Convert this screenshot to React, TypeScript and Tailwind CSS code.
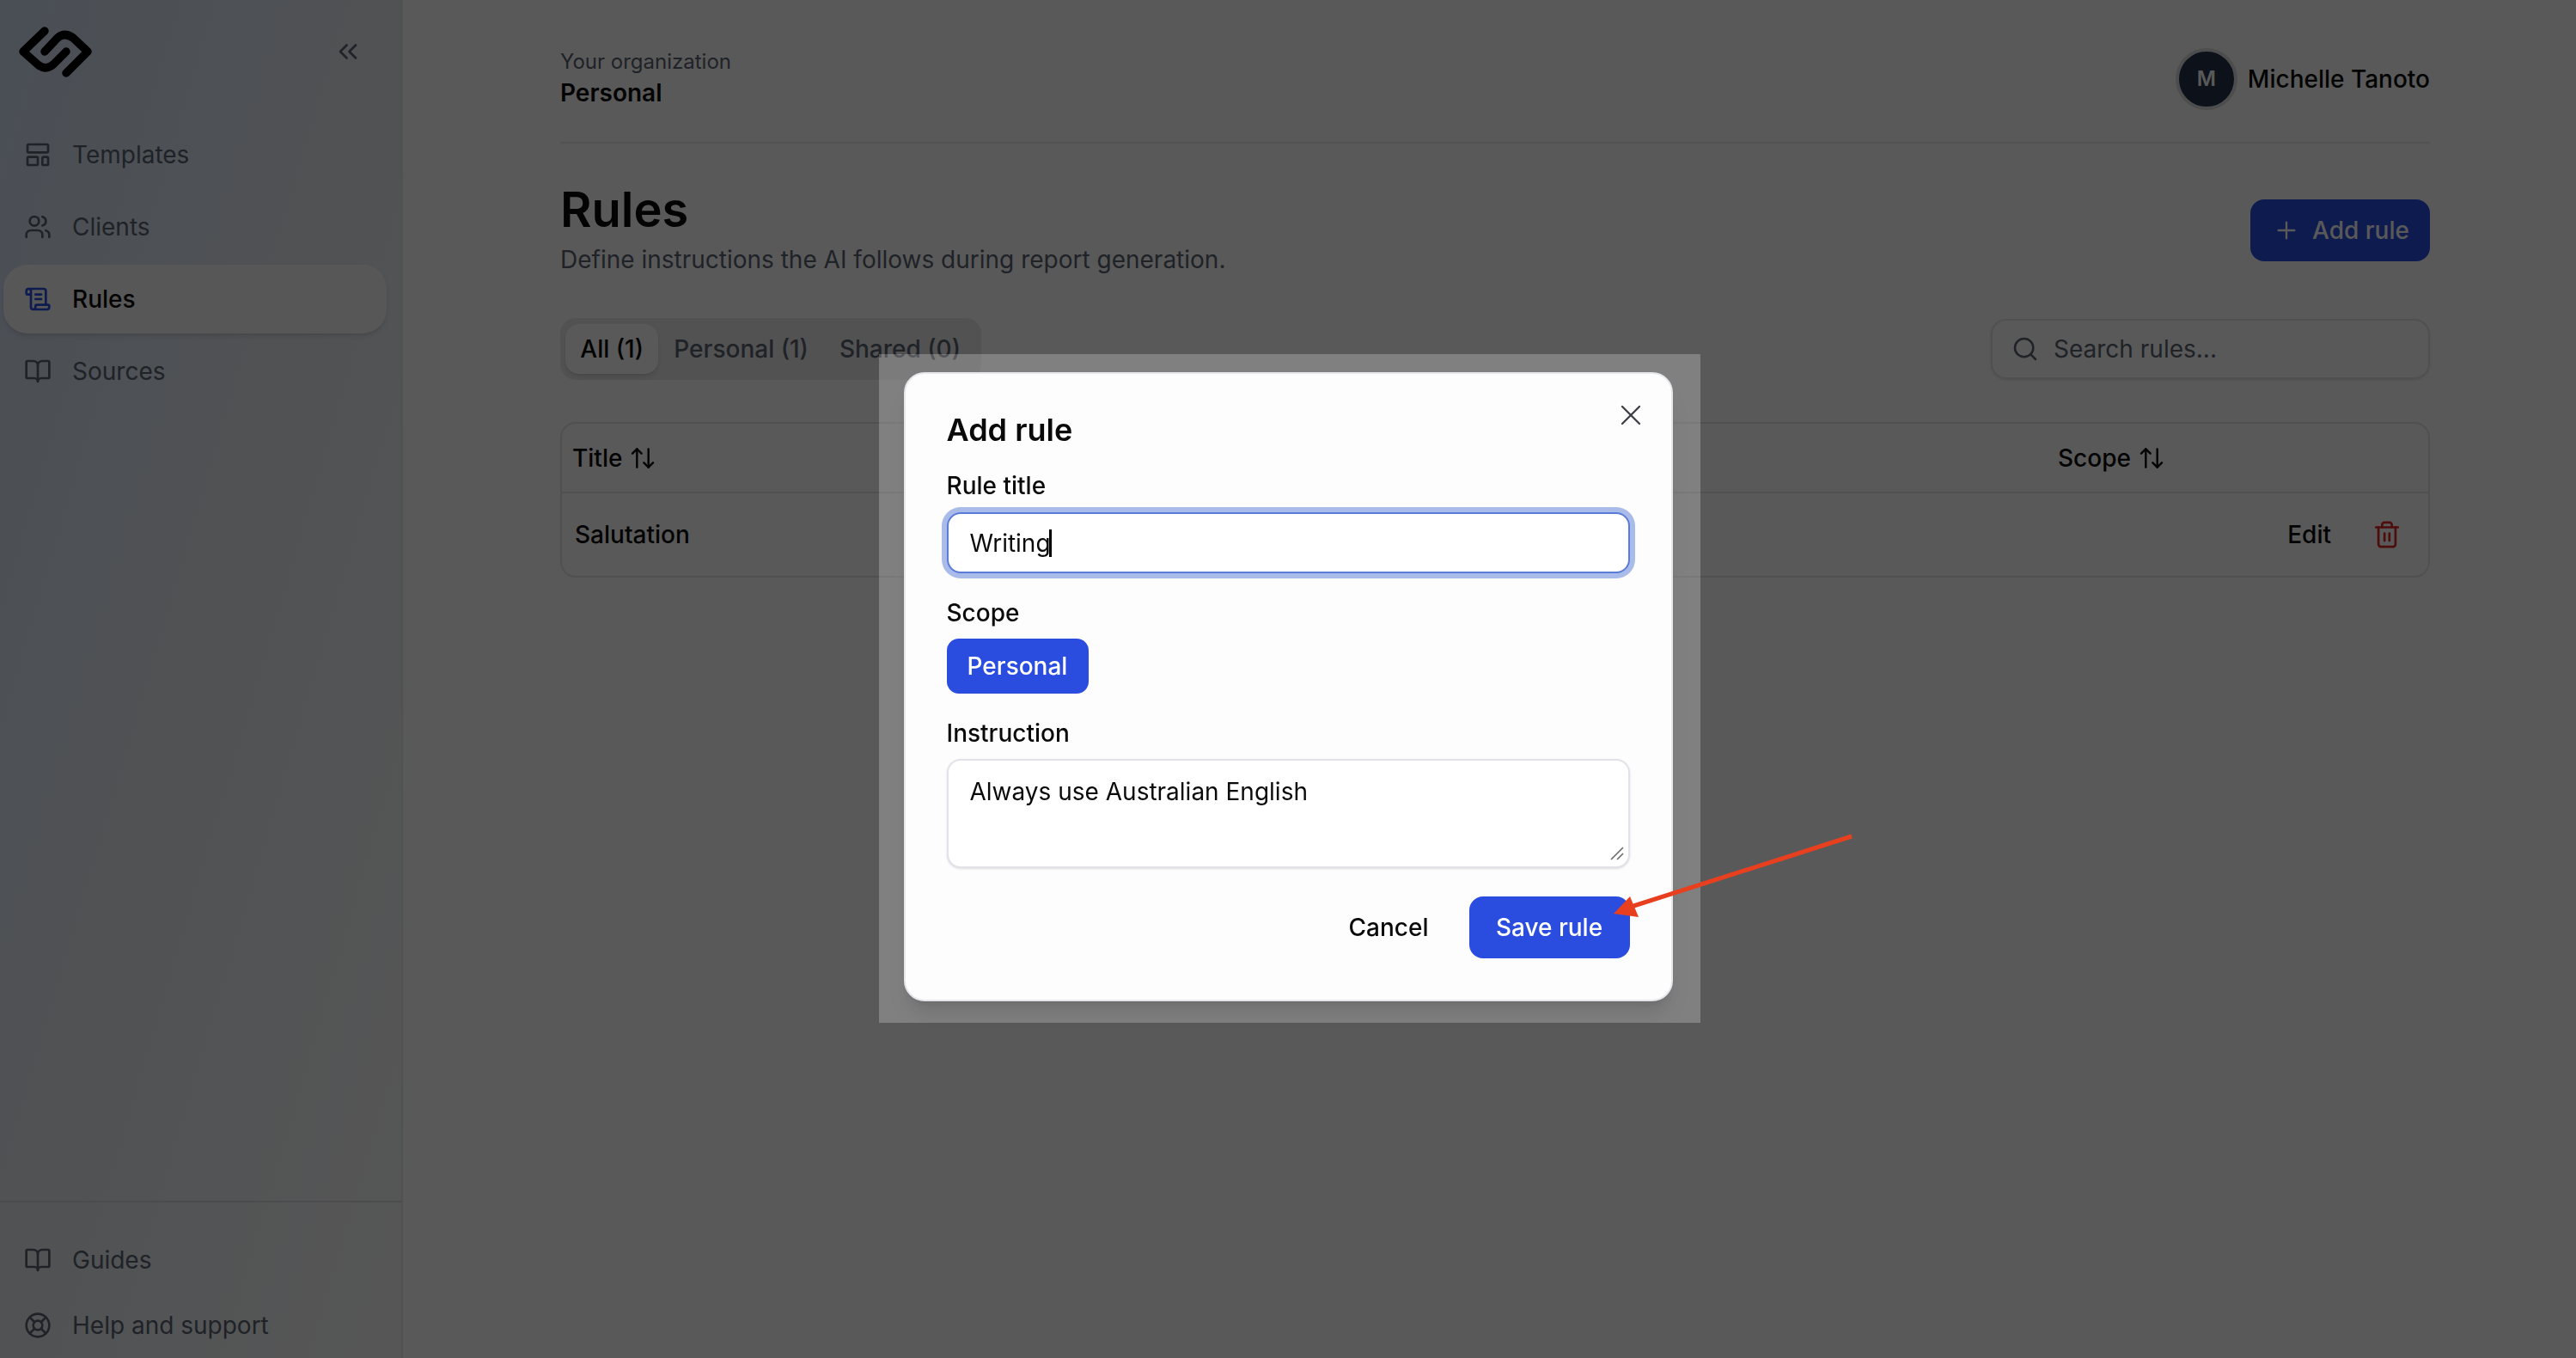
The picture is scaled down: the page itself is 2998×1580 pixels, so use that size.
import {
  ArrowUpDown,
  BookOpen,
  ChevronsLeft,
  LayoutTemplate,
  LifeBuoy,
  Plus,
  ScrollText,
  Search,
  Trash2,
  Users,
  X,
} from "lucide-react";

const navItems = [
  { label: "Templates", icon: LayoutTemplate },
  { label: "Clients", icon: Users },
  { label: "Rules", icon: ScrollText, active: true },
  { label: "Sources", icon: BookOpen },
];

const footerItems = [
  { label: "Guides", icon: BookOpen },
  { label: "Help and support", icon: LifeBuoy },
];

const Logo = () => (
  <svg width="85" height="60" viewBox="22 30 85 60" fill="none" stroke="#000" strokeWidth="9.5" strokeLinecap="round" strokeLinejoin="round">
    <path d="M52 36 L27 60 L45 76 Q54 82 62 75 L77 60" />
    <path d="M77 85 L102 60 L85 44 Q75 37 67 44 L52 60" />
  </svg>
);

const Sidebar = () => (
  <aside className="flex h-full w-[469px] shrink-0 flex-col border-r-2 border-[#e5e7eb] bg-gradient-to-br from-[#d3e1f5] via-[#e6ebf0] to-[#f7f7f7]">
    <div className="flex h-[120px] items-center justify-between pl-[22px] pr-[44px]">
      <Logo />
      <ChevronsLeft size={36} strokeWidth={1.8} className="text-[#5b6270]" />
    </div>
    <nav className="mt-[20px] flex flex-1 flex-col gap-[4px] pl-[4px] pr-[17px]">
      {navItems.map((item) => (
        <div
          key={item.label}
          className={`flex h-[80px] items-center gap-[24px] rounded-[28px] pl-[24px] text-[28px] ${
            item.active ? "bg-[#f9f9fa] font-medium text-[#0a0a0a] shadow-md" : "text-[#5b6270]"
          }`}
        >
          <item.icon size={32} className={item.active ? "text-[#2a4de0]" : "text-[#5b6270]"} />
          {item.label}
        </div>
      ))}
    </nav>
    <div className="border-t-2 border-[#d9dbdf] pl-[4px] pt-[29px]">
      {footerItems.map((item) => (
        <div key={item.label} className="flex h-[76px] items-center gap-[24px] pl-[24px] text-[28px] text-[#5b6270]">
          <item.icon size={32} />
          {item.label}
        </div>
      ))}
    </div>
  </aside>
);

const Page = () => (
  <main className="flex-1 pl-[183px] pr-[170px]">
    <header className="flex h-[167px] items-start justify-between border-b-2 border-[#eaeaea] pt-[54px]">
      <div>
        <div className="text-[24px] leading-[36px] text-[#5b6270]">Your organization</div>
        <div className="text-[28px] font-semibold leading-[36px] text-[#0a0a0a]">Personal</div>
      </div>
      <div className="mt-[2px] flex items-center gap-[12px]">
        <div className="flex h-[72px] w-[72px] items-center justify-center rounded-full border-[4px] border-[#dcdde0] bg-[#253349] text-[24px] font-semibold text-white">
          M
        </div>
        <span className="text-[28px] font-medium text-[#0a0a0a]">Michelle Tanoto</span>
      </div>
    </header>

    <section className="mt-[45px] flex items-start justify-between">
      <div>
        <h1 className="text-[56px] font-semibold leading-[64px] text-[#0a0a0a]">Rules</h1>
        <p className="mt-[6px] text-[28px] leading-[40px] text-[#5b6270]">
          Define instructions the AI follows during report generation.
        </p>
      </div>
      <button className="mt-[20px] flex h-[72px] w-[209px] items-center gap-[14px] rounded-[16px] bg-[#2a4de0] pl-[26px] text-[28px] font-medium text-white">
        <Plus size={32} strokeWidth={1.8} />
        Add rule
      </button>
    </section>

    <section className="mt-[48px] flex items-center justify-between">
      <div className="flex h-[72px] w-[490px] items-center whitespace-nowrap rounded-[18px] bg-[#ebebee] px-[6px] text-[28px] text-[#5b6270]">
        <div className="flex h-[58px] w-[110px] items-center justify-center rounded-[16px] bg-white font-medium text-[#0a0a0a] shadow-md">
          All (1)
        </div>
        <div className="px-[18px] font-medium">Personal (1)</div>
        <div className="px-[18px] font-medium">Shared (0)</div>
      </div>
      <div className="flex h-[70px] w-[511px] items-center gap-[17px] rounded-[18px] border-2 border-[#e6e6e8] pl-[22px] text-[28px] text-[#5b6270] shadow-sm">
        <Search size={32} strokeWidth={1.9} />
        Search rules...
      </div>
    </section>

    <section className="mt-[49px] rounded-[18px] border-2 border-[#e6e6e8] text-[28px] text-[#0a0a0a]">
      <div className="flex h-[81px] items-center border-b-2 border-[#e6e6e8] font-medium">
        <div className="flex flex-1 items-center gap-[8px] pl-[12px]">
          Title
          <ArrowUpDown size={32} strokeWidth={1.8} />
        </div>
        <div className="flex w-[431px] items-center gap-[8px]">
          Scope
          <ArrowUpDown size={32} strokeWidth={1.8} />
        </div>
      </div>
      <div className="flex h-[96px] items-center justify-between pl-[15px] pr-[31px] font-medium">
        <span>Salutation</span>
        <div className="flex items-center gap-[48px]">
          <span>Edit</span>
          <Trash2 size={34} strokeWidth={1.9} className="text-[#dc2626]" />
        </div>
      </div>
    </section>
  </main>
);

const Modal = () => (
  <div className="fixed inset-0 flex items-center justify-center bg-black/65 pl-[3px] pt-[21px]">
    <div className="bg-white/[0.235] pb-[25px] pl-[29px] pr-[32px] pt-[21px]">
      <div className="relative w-[895px] rounded-[24px] border-2 border-[#e5e7eb] bg-[#fdfdfe] pb-[48px] pl-[48px] pr-[48px] pt-[43px] text-[#0a0a0a] shadow-xl">
        <X size={40} strokeWidth={1.4} className="absolute right-[27px] top-[28px] text-[#3f3f46]" />
        <h2 className="text-[36px] font-semibold leading-[44px]">Add rule</h2>

        <label className="mt-[25px] block text-[28px] font-medium leading-[36px]">Rule title</label>
        <div className="mt-[13px] flex h-[71px] items-center rounded-[16px] border-2 border-[#5a7bd8] bg-white pl-[25px] pt-[1px] text-[28px] ring-[6px] ring-[#a9bbe9]">
          Writing
          <span className="-ml-[2px] h-[32px] w-[3px] bg-black" />
        </div>

        <label className="mt-[28px] block text-[28px] font-medium leading-[36px]">Scope</label>
        <button className="mt-[12px] flex h-[64px] w-[165px] items-center justify-center rounded-[14px] bg-[#2a4de0] text-[28px] font-medium text-white">
          Personal
        </button>

        <label className="mt-[28px] block text-[28px] font-medium leading-[36px]">Instruction</label>
        <div className="relative mt-[12px] h-[127px] rounded-[16px] border-2 border-[#e2e3e9] bg-white pl-[25px] pt-[18px] text-[28px] leading-[36px] shadow-sm">
          Always use Australian English
          <svg width="16" height="16" viewBox="0 0 16 16" className="absolute bottom-[7px] right-[5px]" stroke="#6b6b6b" strokeWidth="1.6">
            <path d="M1 15 L15 1 M8 15 L15 8" />
          </svg>
        </div>

        <div className="mt-[33px] flex items-center justify-end gap-[47px] text-[28px] font-medium">
          <span>Cancel</span>
          <button className="flex h-[72px] w-[187px] items-center justify-center rounded-[16px] bg-[#2a4de0] text-white">
            Save rule
          </button>
        </div>
      </div>
    </div>
  </div>
);

const Arrow = () => (
  <svg className="pointer-events-none fixed inset-0" width="2998" height="1580" viewBox="0 0 2998 1580">
    <path d="M2155 973 L1895 1056" stroke="#e8401f" strokeWidth="5" fill="none" />
    <path d="M1878 1063 L1897 1043 L1907 1067 Z" fill="#e8401f" />
  </svg>
);

export default function App() {
  return (
    <div className="flex h-screen w-full overflow-hidden bg-white font-['Inter',sans-serif]">
      <Sidebar />
      <Page />
      <Modal />
      <Arrow />
    </div>
  );
}
